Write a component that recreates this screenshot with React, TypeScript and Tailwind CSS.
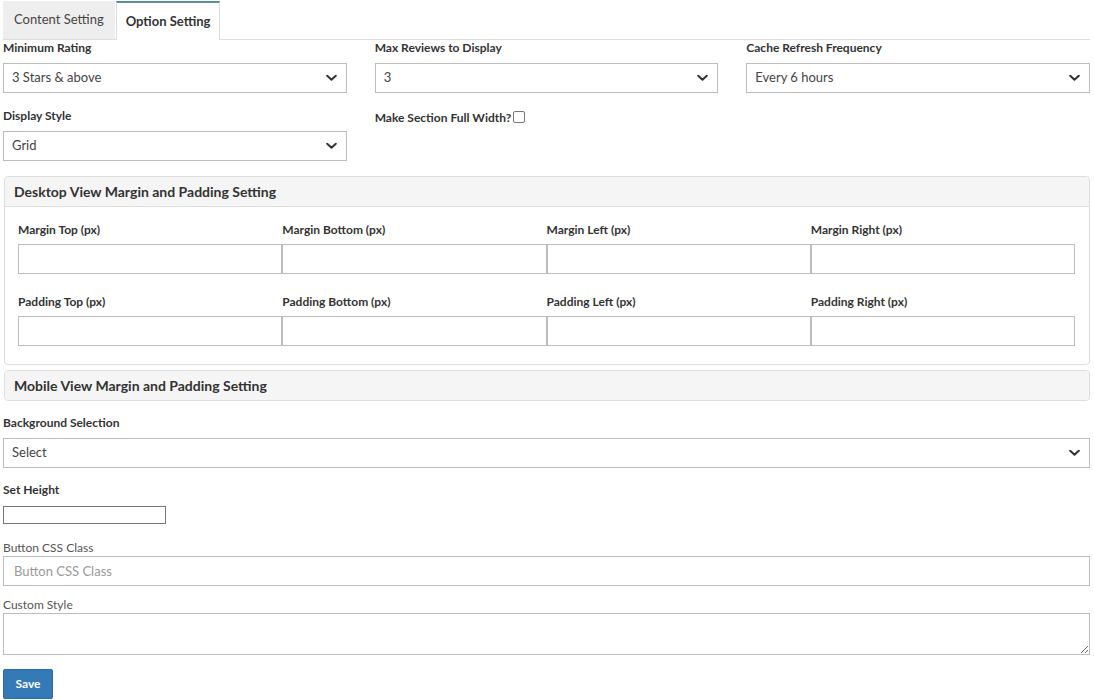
import { ReactNode } from "react";

function Chevron() {
  return (
    <svg
      className="pointer-events-none absolute right-[10px] top-1/2 -translate-y-1/2"
      width="11"
      height="7"
      viewBox="0 0 11 7"
      fill="none"
    >
      <path d="M1.2 1.2 L5.5 5.3 L9.8 1.2" stroke="#333" strokeWidth="2" strokeLinecap="round" strokeLinejoin="round" />
    </svg>
  );
}

function Select({ value }: { value: string }) {
  return (
    <div className="relative">
      <select
        defaultValue={value}
        className="h-[30px] w-full appearance-none border border-[#bdbdbd] bg-white pl-[8px] pr-[28px] text-[13px] text-[#444] outline-none"
      >
        <option>{value}</option>
      </select>
      <Chevron />
    </div>
  );
}

function Label({ children, className = "" }: { children: ReactNode; className?: string }) {
  return <label className={`block text-[12px] font-bold leading-[16px] text-[#333] ${className}`}>{children}</label>;
}

function Field({ label, value }: { label: string; value: string }) {
  return (
    <div>
      <Label className="mb-[7px]">{label}</Label>
      <Select value={value} />
    </div>
  );
}

function BoxInput() {
  return <input type="text" className="h-[30px] w-full border border-[#bdbdbd] bg-white px-2 text-[13px] outline-none" />;
}

const MARGINS = ["Margin Top (px)", "Margin Bottom (px)", "Margin Left (px)", "Margin Right (px)"];
const PADDINGS = ["Padding Top (px)", "Padding Bottom (px)", "Padding Left (px)", "Padding Right (px)"];

function SpacingRow({ labels, className = "" }: { labels: string[]; className?: string }) {
  return (
    <div className={`grid grid-cols-4 ${className}`}>
      {labels.map((l) => (
        <div key={l}>
          <Label className="mb-[6px]">{l}</Label>
          <BoxInput />
        </div>
      ))}
    </div>
  );
}

function PanelHeader({ title }: { title: string }) {
  return (
    <div className="flex h-[29px] items-center bg-[#f5f5f5] px-[9px] text-[14px] font-bold text-[#333]">{title}</div>
  );
}

export default function App() {
  return (
    <div className="min-h-screen bg-white px-[3px] pr-[4px] font-['Lato','Liberation_Sans',sans-serif] text-[#333]">
      {/* Tabs */}
      <div className="flex border-b border-[#dddddd] pt-[1px]">
        <button className="h-[38px] bg-[#eeeeee] px-[11px] text-[13px] text-[#444]">Content Setting</button>
        <button className="-mb-px ml-px h-[39px] border-x border-t-2 border-x-[#dddddd] border-t-[#5d8ca3] bg-white px-[9px] text-[13px] font-bold text-[#333]">
          Option Setting
        </button>
      </div>

      {/* General options */}
      <div className="grid grid-cols-3 gap-x-[28px]">
        <Field label="Minimum Rating" value="3 Stars & above" />
        <Field label="Max Reviews to Display" value="3" />
        <Field label="Cache Refresh Frequency" value="Every 6 hours" />
      </div>
      <div className="mt-[15px] grid grid-cols-3 gap-x-[28px]">
        <Field label="Display Style" value="Grid" />
        <div className="flex items-start gap-[2px] pt-[2px]">
          <Label>Make Section Full Width?</Label>
          <input type="checkbox" className="mt-[1px] h-[12px] w-[12px] appearance-none rounded-[2px] border border-[#767676] bg-white" />
        </div>
      </div>

      {/* Desktop spacing */}
      <div className="ml-px mt-[15px] overflow-hidden rounded-[4px] border border-[#dddddd]">
        <div className="border-b border-[#dddddd]">
          <PanelHeader title="Desktop View Margin and Padding Setting" />
        </div>
        <div className="pb-[18px] pl-[13px] pr-[14px] pt-[15px]">
          <SpacingRow labels={MARGINS} />
          <SpacingRow labels={PADDINGS} className="mt-[20px]" />
        </div>
      </div>

      {/* Mobile spacing */}
      <div className="ml-px mt-[5px] overflow-hidden rounded-[4px] border border-[#dddddd]">
        <PanelHeader title="Mobile View Margin and Padding Setting" />
      </div>

      <div className="mt-[14px]">
        <Field label="Background Selection" value="Select" />
      </div>

      <div className="mt-[14px]">
        <Label className="mb-[8px]">Set Height</Label>
        <input type="text" className="block h-[18px] w-[163px] border border-[#767676] bg-white px-1 text-[12px] outline-none" />
      </div>

      <div className="mt-[16px]">
        <label className="block text-[12px] leading-[16px] text-[#555]">Button CSS Class</label>
        <input
          type="text"
          placeholder="Button CSS Class"
          className="block h-[30px] w-full border border-[#bdbdbd] bg-white px-[10px] text-[13px] outline-none placeholder:text-[#999]"
        />
      </div>

      <div className="mt-[11px]">
        <label className="mb-[0px] block text-[12px] leading-[16px] text-[#555]">Custom Style</label>
        <textarea className="block h-[42px] w-full border border-[#bdbdbd] bg-white px-2 text-[13px] outline-none" />
      </div>

      <button className="mt-[14px] h-[30px] w-[50px] rounded-[2px] border border-[#2e6da4] bg-[#337ab7] text-[12px] font-bold text-white">
        Save
      </button>
    </div>
  );
}
